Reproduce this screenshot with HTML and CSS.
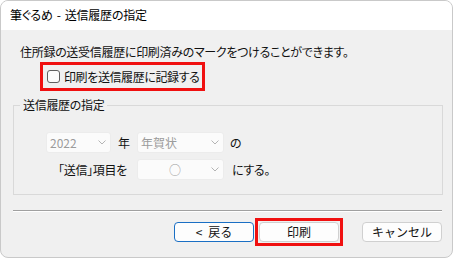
FILE: index.html
```html
<!DOCTYPE html>
<html lang="ja">
<head>
<meta charset="utf-8">
<link rel="stylesheet" href="styles.css">
</head>
<body>
<div class="window">
  <div class="titlebar">筆ぐるめ - 送信履歴の指定</div>
  <div class="content">
    <p class="intro">住所録の送受信履歴に印刷済みのマークをつけることができます。</p>
    <div class="check-row">
      <label class="check-label mark"><span class="box"></span><span>印刷を送信履歴に記録する</span></label>
    </div>
    <fieldset class="group">
      <legend class="legend">送信履歴の指定</legend>
      <div class="grid">
        <div class="combo c-year"><span class="val">2022</span><svg class="chev" width="8" height="5" viewBox="0 0 8 5"><polyline points="0.5,0.5 4,4 7.5,0.5" fill="none" stroke="#b4b4b4" stroke-width="1"/></svg></div>
        <div class="unit">年</div>
        <div class="combo c-kind"><span class="val">年賀状</span><svg class="chev" width="8" height="5" viewBox="0 0 8 5"><polyline points="0.5,0.5 4,4 7.5,0.5" fill="none" stroke="#b4b4b4" stroke-width="1"/></svg></div>
        <div class="after">の</div>
        <div class="row-label">「送信」項目を</div>
        <div class="combo c-kind"><span class="val center">○</span><svg class="chev" width="8" height="5" viewBox="0 0 8 5"><polyline points="0.5,0.5 4,4 7.5,0.5" fill="none" stroke="#b4b4b4" stroke-width="1"/></svg></div>
        <div class="after after2">にする。</div>
      </div>
    </fieldset>
    <div class="sep"></div>
    <div class="buttons">
      <button class="btn btn-default"><span class="lt">&lt;</span> 戻る</button>
      <span class="mark-wrap"><button class="btn">印刷</button></span>
      <button class="btn btn-cancel">キャンセル</button>
    </div>
  </div>
</div>
</body>
</html>
```
FILE: styles.css
```css
* { box-sizing: border-box; }
html, body { margin: 0; padding: 0; background: #ffffff; }
body {
  font-family: "Noto Sans CJK JP", "Noto Sans", sans-serif;
  font-size: 12px;
  color: #111;
  font-feature-settings: "palt";
}
.window {
  width: 453px;
  height: 258px;
  border: 1px solid #c9c9c9;
  border-radius: 8px;
  overflow: hidden;
  background: #f0f0f0;
  display: flex;
  flex-direction: column;
}
.titlebar {
  height: 29px;
  line-height: 28px;
  background: #fff;
  padding-left: 9px;
  color: #000;
  letter-spacing: -0.2px;
  word-spacing: 1.5px;
}
.content {
  flex: 1;
  padding-top: 14px;
}
.intro {
  margin: 0;
  padding-left: 19px;
  line-height: 16px;
  letter-spacing: -0.3px;
}
.check-row {
  margin-top: 5px;
  padding-left: 42px;
  height: 23px;
}
.check-label {
  display: inline-flex;
  align-items: center;
  height: 23px;
  padding: 0 3px 0 4px;
  gap: 4px;
  letter-spacing: -0.4px;
}
.mark { outline: 3px solid #f01010; }
.box {
  width: 13px;
  height: 13px;
  border: 1px solid #5f5f5f;
  border-radius: 3px;
  background: #fbfbfb;
}
.group {
  margin: 9px 0 0 12px;
  width: 430px;
  height: 98px;
  border: 1px solid #d9d9d9;
  padding: 19px 0 0 0;
}
.legend {
  margin-left: 6px;
  padding: 0 3px;
  line-height: 16px;
  letter-spacing: -0.3px;
}
.grid {
  margin-left: 32px;
  display: grid;
  grid-template-columns: 65px 26px 87px auto;
  grid-template-rows: 21px 21px;
  row-gap: 6px;
  align-items: center;
}
.combo {
  height: 21px;
  background: #fbfbfb;
  border: 1px solid #ececec;
  border-radius: 3px;
  display: flex;
  align-items: center;
  padding: 0 4px 0 3px;
  color: #9c9c9c;
}
.val { flex: 1; }
.val.center { text-align: center; padding-right: 2px; }
.chev { flex: none; }
.unit { text-align: center; }
.after { padding-left: 6px; }
.after2 { padding-left: 8px; letter-spacing: -0.3px; }
.row-label {
  grid-column: 1 / 3;
  text-align: right;
  padding-right: 10px;
  letter-spacing: -0.3px;
}
.sep {
  margin: 15px 0 0 12px;
  width: 429px;
  border-top: 1px solid #a0a0a0;
  border-bottom: 1px solid #ffffff;
}
.buttons {
  display: flex;
  justify-content: flex-end;
  align-items: flex-start;
  padding-right: 10px;
  margin-top: 10px;
}
.btn {
  font: inherit;
  font-feature-settings: normal;
  color: #111;
  width: 80px;
  height: 20px;
  padding: 0;
  line-height: 18px;
  background: #fdfdfd;
  border: 1px solid #d0d0d0;
  border-radius: 4px;
  display: block;
}
.lt { margin-right: 3px; }
.btn-default { border-color: #1a6fc4; }
.mark-wrap {
  display: block;
  margin-left: 5px;
  outline: 3px solid #f01010;
  outline-offset: 1px;
}
.btn-cancel { margin-left: 23px; }
```
